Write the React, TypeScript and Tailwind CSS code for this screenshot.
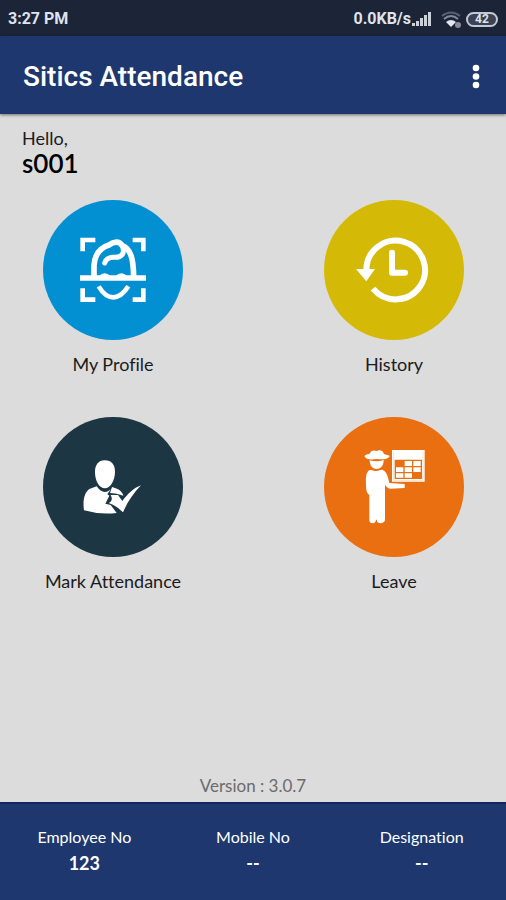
import type { ReactNode } from 'react';

interface MenuItem {
  label: string;
  color: string;
  icon: ReactNode;
}

interface EmployeeField {
  label: string;
  value: string;
}

function ProfileIcon() {
  return (
    <svg viewBox="-81 -75 420 420" className="h-full w-full" fill="none" stroke="white" aria-hidden="true">
      <path d="M38 79V45H76M188 45H220V79M38 190V224H76M188 224H220V190" strokeWidth="14" />
      <path d="M30 159H228" strokeWidth="16" />
      <path d="M72 154V122C74 86 91 68 117 60C132 48 148 48 157 62C181 72 190 97 191 154" strokeWidth="17" strokeLinejoin="round" />
      <path d="M104 114C108 100 122 96 136 97C154 97 165 86 158 66" strokeWidth="15" strokeLinecap="round" />
      <path d="M86 154Q104 136 122 154ZM136 154Q154 136 172 154Z" fill="white" stroke="none" />
      <path d="M86 184C98 204 114 217 130 217C147 217 161 206 175 184" strokeWidth="14" />
    </svg>
  );
}

function HistoryIcon() {
  return (
    <svg viewBox="-63 -75 420 420" className="h-full w-full" fill="none" stroke="white" aria-hidden="true">
      <path d="M64 136A88 88 0 1 1 84 191" strokeWidth="18" />
      <path d="M33 132H90L64 169Z" fill="white" stroke="none" />
      <path d="M141 83V143H180" strokeWidth="18" strokeLinecap="round" strokeLinejoin="round" />
    </svg>
  );
}

function AttendanceIcon() {
  return (
    <svg viewBox="-81 -84 420 420" className="h-full w-full" fill="white" aria-hidden="true">
      <path d="M104 46C125 46 136 60 135 82C134 108 121 130 105 130C88 130 76 109 75 84C74 60 85 46 104 46Z" />
      <path d="M80 124C88 135 96 141 104 141C111 141 117 138 122 133L112 148L118 152L106 176L122 180L140 204Q90 210 42 196C38 170 42 143 58 132Z" />
      <path d="M126 126C145 131 157 139 160 152L140 146L120 144Z" />
      <path d="M122 150L144 150L157 168C173 147 191 129 213 121C192 143 173 169 159 202C148 192 137 181 116 174C126 170 128 161 122 150Z" />
    </svg>
  );
}

function LeaveIcon() {
  return (
    <svg viewBox="-78 -69 420 420" className="h-full w-full" fill="white" aria-hidden="true">
      <path d="M43 48C50 42 56 44 60 40C62 32 70 29 80 33C91 28 99 32 102 42L119 47C116 58 98 59 80 57C63 60 47 59 43 48Z" />
      <path d="M59 61C73 65 88 65 101 60C101 76 93 87 80 87C67 87 59 77 59 61Z" />
      <path d="M60 90C66 89 72 93 79 93C87 93 92 88 98 90C110 95 114 110 118 129L164 132V144L122 146C112 144 109 140 105 134V240C105 250 87 252 82 246L80 238L76 246C70 252 58 251 58 241V165C50 159 48 150 48 137C47 112 48 94 60 90Z" />
      <path fillRule="evenodd" d="M126 30H224V125H126ZM134 59V117H216V59Z" />
      <path d="M164 63H186V78H164ZM190 63H212V78H190ZM138 82H160V96H138ZM164 82H186V96H164ZM190 82H212V96H190ZM138 100H160V113H138ZM164 100H186V113H164Z" />
      <path d="M131 34V121H219V34" fill="none" stroke="#f3a56f" strokeWidth="1" />
    </svg>
  );
}

const menuItems: MenuItem[] = [
  { label: 'My Profile', color: 'bg-[#0390d3]', icon: <ProfileIcon /> },
  { label: 'History', color: 'bg-[#d4ba07]', icon: <HistoryIcon /> },
  { label: 'Mark Attendance', color: 'bg-[#1d3643]', icon: <AttendanceIcon /> },
  { label: 'Leave', color: 'bg-[#e96f11]', icon: <LeaveIcon /> },
];

const employeeFields: EmployeeField[] = [
  { label: 'Employee No', value: '123' },
  { label: 'Mobile No', value: '--' },
  { label: 'Designation', value: '--' },
];

function StatusBar() {
  return (
    <div className="flex h-9 items-center justify-between bg-[#1c2438] px-2 pt-0.5 font-[Roboto,sans-serif] text-base font-bold text-[#dfe3ec]">
      <span>3:27 PM</span>
      <div className="flex items-center">
        <span>0.0KB/s</span>
        <svg viewBox="0 0 22 16" className="ml-px h-4 w-[22px]" fill="#cdd1da" aria-hidden="true">
          <path d="M0 12H3V15H0ZM4 10H7V15H4ZM8 7H11V15H8ZM12 4H15V15H12ZM16 1H19V15H16Z" />
        </svg>
        <svg viewBox="0 0 22 18" className="ml-1.5 h-[18px] w-[22px]" fill="none" aria-hidden="true">
          <path d="M2 6Q11-1 20 6" stroke="#596073" strokeWidth="2" />
          <path d="M4 9Q11 3 18 9" stroke="#858b99" strokeWidth="2" />
          <path d="M6 12Q11 8 16 12L11 17Z" fill="#e5e8ee" />
          <circle cx="18" cy="15" r="3" fill="#878d9b" />
        </svg>
        <div className="ml-1 flex h-[15px] w-8 items-center justify-center rounded-full border-2 border-[#c5c9d3] bg-[#3b4254] text-xs">
          42
        </div>
      </div>
    </div>
  );
}

export default function App() {
  return (
    <div className="flex min-h-screen flex-col bg-[#dcdcdc] font-[Lato,sans-serif] text-[#1b1b1b] [font-variant-ligatures:none]">
      <StatusBar />

      <header className="z-10 flex h-[78px] items-center justify-between bg-[#1e376e] pt-1 pr-4 pl-[23px] text-white shadow-[0_1px_3px_rgba(0,0,0,0.5)]">
        <h1 className="font-[Roboto,sans-serif] text-[28px] leading-8 font-medium">Sitics Attendance</h1>
        <button type="button" aria-label="More options" className="flex h-10 w-7 items-center justify-center">
          <svg viewBox="0 0 8 26" className="h-[26px] w-2" fill="white" aria-hidden="true">
            <circle cx="4" cy="4" r="3.3" />
            <circle cx="4" cy="12.5" r="3.3" />
            <circle cx="4" cy="21" r="3.3" />
          </svg>
        </button>
      </header>

      <main className="flex flex-1 flex-col">
        {/* Greeting */}
        <div className="px-[22px] pt-[13px]">
          <p className="text-lg leading-[22px]">Hello,</p>
          <p className="text-[26px] leading-7 font-semibold text-black">s001</p>
        </div>

        {/* Menu */}
        <nav className="mt-[23px] grid grid-cols-[auto_auto] justify-between gap-y-[41px] px-[42px] pl-[43px]">
          {menuItems.map((item) => (
            <button key={item.label} type="button" className="flex w-[140px] flex-col items-center">
              <span className={`block h-[140px] w-[140px] rounded-full ${item.color}`}>{item.icon}</span>
              <span className="mt-3 text-lg leading-6 whitespace-nowrap">{item.label}</span>
            </button>
          ))}
        </nav>

        <p className="mt-auto pb-1 text-center text-[17px] leading-6 text-[#6b6b6b]">Version : 3.0.7</p>
      </main>

      {/* Employee details */}
      <footer className="grid h-[98px] grid-cols-3 border-t-2 border-[#132560] bg-[#1e376e] pt-[21px] text-center text-white">
        {employeeFields.map((field) => (
          <div key={field.label}>
            <p className="text-base leading-6">{field.label}</p>
            <p className="text-lg leading-7 font-bold">{field.value}</p>
          </div>
        ))}
      </footer>
    </div>
  );
}
